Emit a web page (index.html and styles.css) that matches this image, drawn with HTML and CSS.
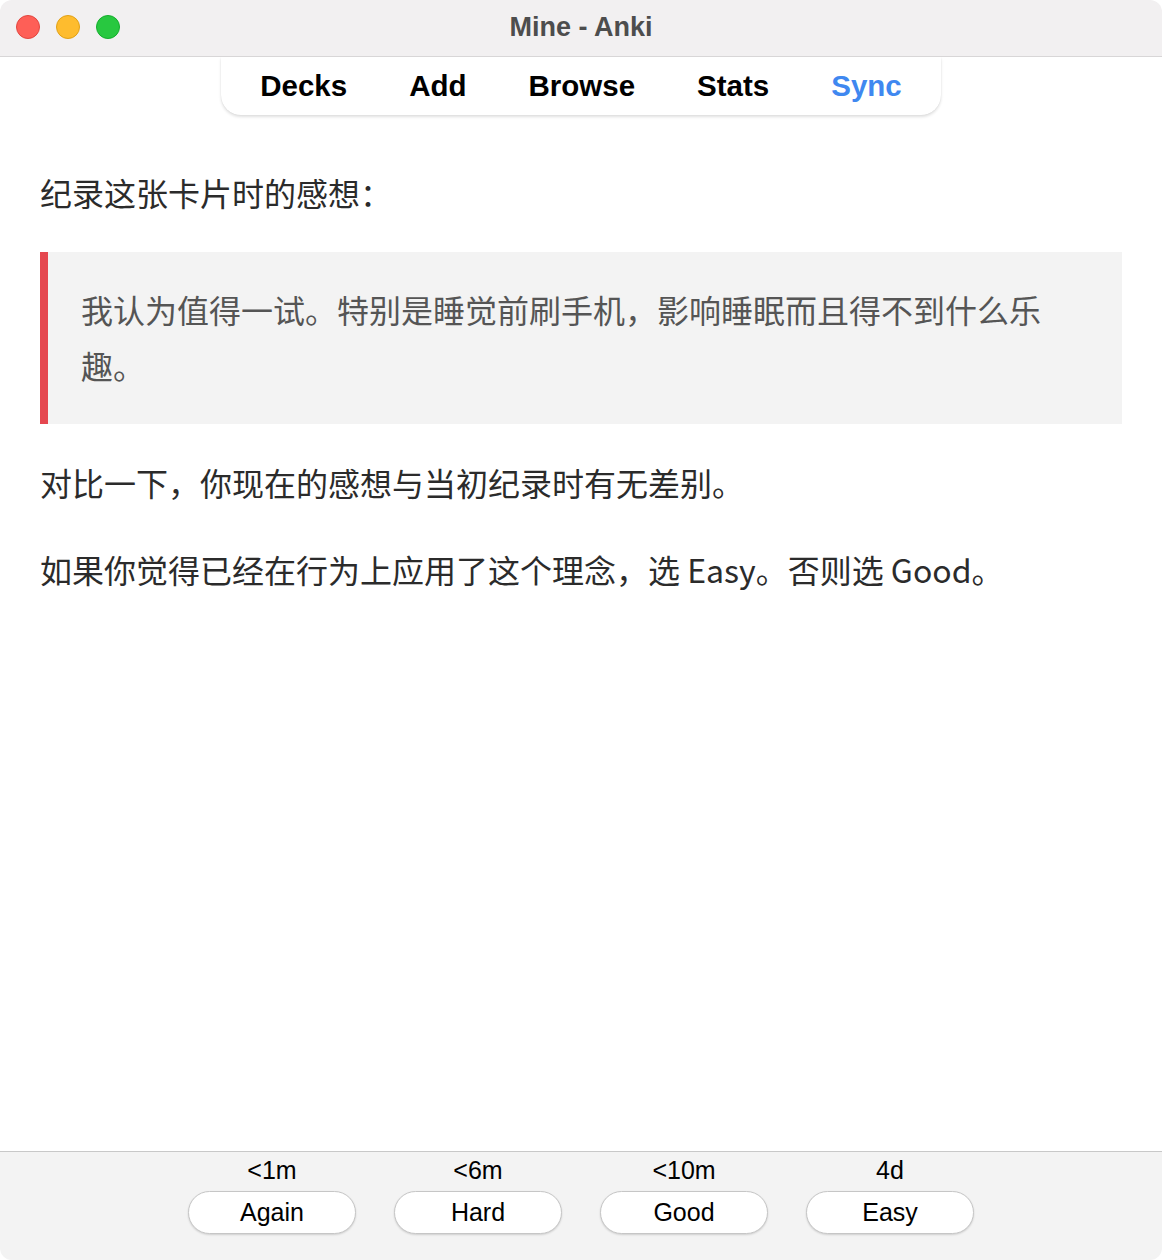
FILE: index.html
```html
<!DOCTYPE html>
<html lang="zh">
<head>
<meta charset="utf-8">
<title>Mine - Anki</title>
<link rel="stylesheet" href="styles.css">
</head>
<body>
<div class="window">
  <header class="titlebar">
    <div class="lights">
      <span class="light red"></span>
      <span class="light yellow"></span>
      <span class="light green"></span>
    </div>
    <div class="title">Mine - Anki</div>
  </header>
  <main class="main">
    <nav class="toolbar">
      <a class="tab">Decks</a>
      <a class="tab">Add</a>
      <a class="tab">Browse</a>
      <a class="tab">Stats</a>
      <a class="tab sync">Sync</a>
    </nav>
    <section class="card">
      <p class="para first">纪录这张卡片时的感想：</p>
      <blockquote class="quote">我认为值得一试。特别是睡觉前刷手机，影响睡眠而且得不到什么乐趣。</blockquote>
      <p class="para second">对比一下，你现在的感想与当初纪录时有无差别。</p>
      <p class="para">如果你觉得已经在行为上应用了这个理念，选 Easy。否则选 Good。</p>
    </section>
  </main>
  <footer class="answers">
    <div class="answer">
      <span class="due">&lt;1m</span>
      <button class="btn">Again</button>
    </div>
    <div class="answer">
      <span class="due">&lt;6m</span>
      <button class="btn">Hard</button>
    </div>
    <div class="answer">
      <span class="due">&lt;10m</span>
      <button class="btn">Good</button>
    </div>
    <div class="answer">
      <span class="due">4d</span>
      <button class="btn">Easy</button>
    </div>
  </footer>
</div>
</body>
</html>
```
FILE: styles.css
```css
* { box-sizing: border-box; }
html, body { margin: 0; padding: 0; background: #ffffff; }
body { width: 1162px; height: 1260px; overflow: hidden; }

.window {
  width: 1162px;
  height: 1260px;
  display: flex;
  flex-direction: column;
  border-radius: 12px;
  overflow: hidden;
  background: #ffffff;
}

.titlebar {
  height: 57px;
  flex: 0 0 57px;
  background: #f2f0f1;
  border-bottom: 1px solid #d8d6d7;
  display: flex;
  align-items: center;
  justify-content: center;
  position: relative;
}
.lights {
  position: absolute;
  left: 16px;
  top: 15px;
  display: flex;
  gap: 16px;
}
.light {
  width: 24px;
  height: 24px;
  border-radius: 50%;
  display: block;
}
.red { background: #fe5f57; border: 1px solid #e2463f; }
.yellow { background: #febc2e; border: 1px solid #e1a116; }
.green { background: #28c840; border: 1px solid #14ae2c; }
.title {
  font-family: "Liberation Sans", Arial, sans-serif;
  font-weight: bold;
  font-size: 27px;
  color: #4d4d4d;
  margin-top: -2px;
}

.main {
  flex: 1;
  padding: 0 40px;
  display: flex;
  flex-direction: column;
}

.toolbar {
  align-self: center;
  display: flex;
  height: 58px;
  align-items: center;
  padding: 0 8px;
  background: #ffffff;
  border-radius: 0 0 20px 20px;
  box-shadow: 0 2px 3px rgba(0, 0, 0, 0.12), 0 0 1px rgba(0, 0, 0, 0.12);
}
.tab {
  font-family: "Liberation Sans", Arial, sans-serif;
  font-weight: bold;
  font-size: 29.5px;
  color: #000000;
  padding: 0 31px;
  line-height: 58px;
}
.tab.sync { color: #3f88f0; }

.card {
  margin-top: 49px;
  font-family: "Noto Sans CJK SC", "Noto Sans", sans-serif;
  font-size: 32px;
  line-height: 56px;
  color: #2b2b2b;
}
.para { margin: 0 0 31px; }
.para.first { margin-bottom: 32px; }
.para.second { margin-bottom: 31px; }
.quote {
  margin: 0 0 30px;
  padding: 29px 33px 31px;
  background: #f3f3f3;
  border-left: 8px solid #e5474f;
  color: #555555;
}

.answers {
  flex: 0 0 109px;
  height: 109px;
  background: #f3f3f3;
  border-top: 1px solid #c8c8c8;
  display: flex;
  justify-content: center;
  gap: 38px;
  padding-top: 4px;
}
.answer {
  width: 168px;
  display: flex;
  flex-direction: column;
  align-items: center;
}
.due {
  font-family: "Liberation Sans", Arial, sans-serif;
  font-size: 25px;
  line-height: 28px;
  color: #000000;
}
.btn {
  margin-top: 7px;
  width: 168px;
  height: 43px;
  border-radius: 22px;
  border: 1px solid #c6c6c6;
  background: #ffffff;
  box-shadow: 0 1px 2px rgba(0, 0, 0, 0.15);
  font-family: "Liberation Sans", Arial, sans-serif;
  font-size: 25px;
  color: #000000;
  padding: 0;
}
```
